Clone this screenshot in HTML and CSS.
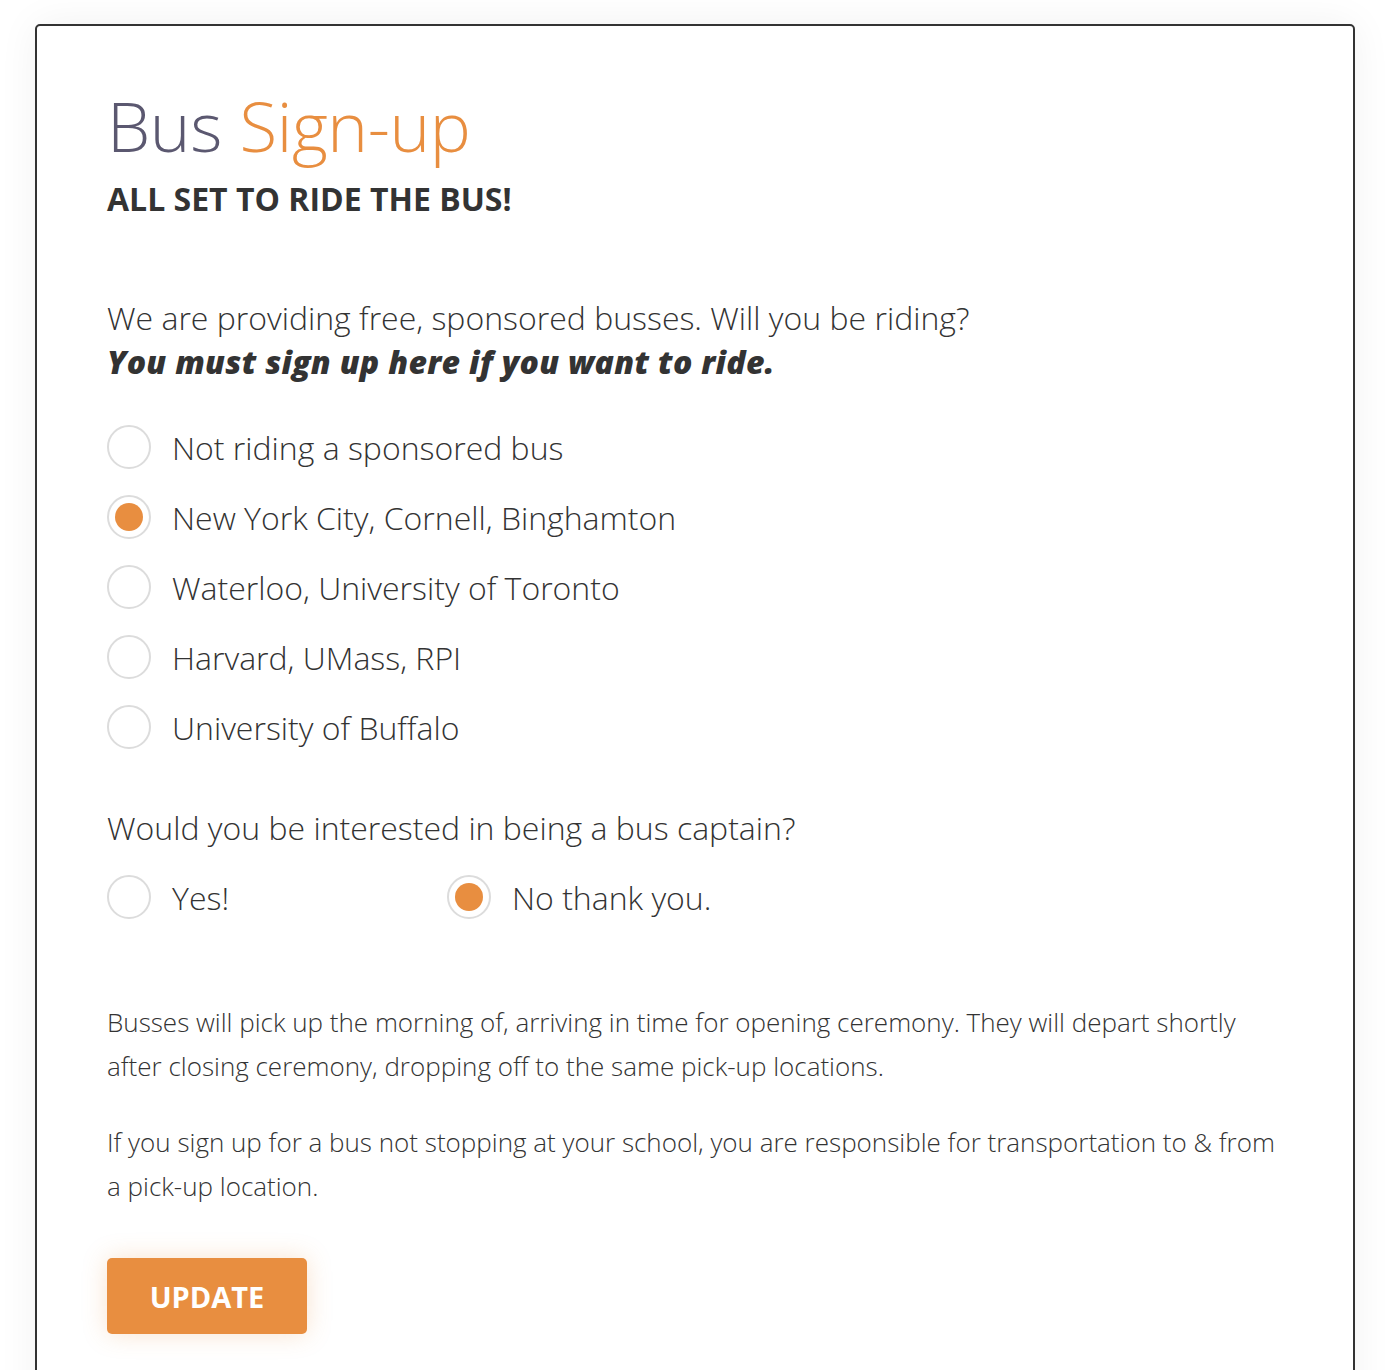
FILE: index.html
```html
<!DOCTYPE html>
<html lang="en">
<head>
<meta charset="utf-8">
<title>Bus Sign-up</title>
<link rel="stylesheet" href="styles.css">
</head>
<body>
<main class="card">
  <h1 class="title"><span class="title-dark">Bus</span> <span class="title-accent">Sign-up</span></h1>
  <h2 class="subtitle">ALL SET TO RIDE THE BUS!</h2>

  <p class="lead">We are providing free, sponsored busses. Will you be riding?<br><strong><em>You must sign up here if you want to ride.</em></strong></p>

  <div class="options">
    <label class="option"><span class="radio"></span><span>Not riding a sponsored bus</span></label>
    <label class="option"><span class="radio checked"></span><span>New York City, Cornell, Binghamton</span></label>
    <label class="option"><span class="radio"></span><span>Waterloo, University of Toronto</span></label>
    <label class="option"><span class="radio"></span><span>Harvard, UMass, RPI</span></label>
    <label class="option"><span class="radio"></span><span>University of Buffalo</span></label>
  </div>

  <p class="question">Would you be interested in being a bus captain?</p>
  <div class="captain">
    <label class="option col"><span class="radio"></span><span>Yes!</span></label>
    <label class="option col"><span class="radio checked"></span><span>No thank you.</span></label>
  </div>

  <p class="note">Busses will pick up the morning of, arriving in time for opening ceremony. They will depart shortly after closing ceremony, dropping off to the same pick-up locations.</p>
  <p class="note">If you sign up for a bus not stopping at your school, you are responsible for transportation to &amp; from a pick-up location.</p>

  <button class="btn" type="button">UPDATE</button>
</main>
</body>
</html>
```

FILE: styles.css
```css
* { box-sizing: border-box; }
html, body { margin: 0; padding: 0; }
body {
  background: #ffffff;
  font-family: "Open Sans", "Liberation Sans", sans-serif;
  color: #333333;
  height: 1370px;
  overflow: hidden;
}
.card {
  margin: 24px 33px 0 35px;
  border: 2px solid #333333;
  border-radius: 5px;
  background: #fff;
  box-shadow: 0 0 40px rgba(0, 0, 0, 0.06);
  padding: 65px 70px 40px 70px;
  min-height: 1400px;
}
.title {
  margin: 0;
  font-size: 69px;
  font-weight: 300;
  line-height: 68px;
  letter-spacing: -0.4px;
}
.title-dark { color: #5b5870; }
.title-accent { color: #e88e40; }
.subtitle {
  margin: 20px 0 0 0;
  font-size: 32px;
  font-weight: 700;
  line-height: 40px;
  color: #333;
}
.lead {
  margin: 77px 0 0 0;
  font-size: 32px;
  font-weight: 300;
  line-height: 44px;
}
.lead strong { font-weight: 800; letter-spacing: 0.3px; }
.options {
  margin-top: 28px;
  display: flex;
  flex-direction: column;
}
.option {
  display: flex;
  align-items: center;
  gap: 21px;
  height: 70px;
  font-size: 32px;
  font-weight: 300;
}
.radio {
  flex: none;
  width: 44px;
  height: 44px;
  border-radius: 50%;
  border: 2px solid #dcdcdc;
  background: #fff;
  display: flex;
  align-items: center;
  justify-content: center;
}
.radio.checked::after {
  content: "";
  width: 28px;
  height: 28px;
  border-radius: 50%;
  background: #e88e40;
}
.question {
  margin: 44px 0 0 0;
  font-size: 32px;
  font-weight: 300;
  line-height: 44px;
}
.captain {
  margin-top: 12px;
  display: flex;
}
.option.col { width: 340px; }
.note {
  margin: 0;
  font-size: 26px;
  font-weight: 300;
  line-height: 44px;
}
.captain + .note { margin-top: 68px; }
.note + .note { margin-top: 32px; }
.btn {
  display: block;
  margin-top: 50px;
  width: 200px;
  height: 76px;
  border: none;
  border-radius: 5px;
  background: #e88e40;
  color: #fff;
  font-family: "Open Sans", "Liberation Sans", sans-serif;
  font-size: 29px;
  font-weight: 700;
  box-shadow: 0 0 24px rgba(232, 142, 64, 0.25);
}
```
